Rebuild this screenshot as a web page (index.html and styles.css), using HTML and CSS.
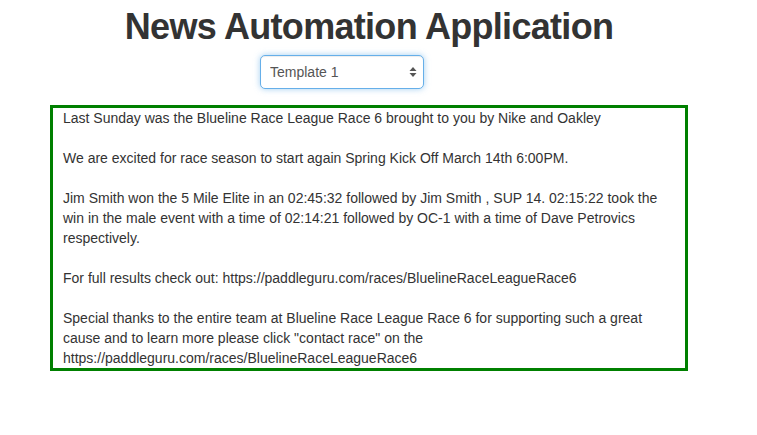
FILE: index.html
```html
<!DOCTYPE html>
<html>
<head>
<meta charset="utf-8">
<link rel="stylesheet" href="styles.css">
</head>
<body>
<main class="page">
  <h1 class="title">News Automation Application</h1>
  <div class="select-wrap">
    <select class="template-select">
      <option>Template 1</option>
      <option>Template 2</option>
    </select>
    <svg class="select-arrows" width="8" height="12" viewBox="0 0 8 12" aria-hidden="true">
      <path d="M4 1 L7.5 5 L0.5 5 Z" fill="#555"/>
      <path d="M4 11 L7.5 7 L0.5 7 Z" fill="#555"/>
    </svg>
  </div>
  <div class="article">
    <p>Last Sunday was the Blueline Race League Race 6 brought to you by Nike and Oakley</p>
    <p>We are excited for race season to start again Spring Kick Off March 14th 6:00PM.</p>
    <p>Jim Smith won the 5 Mile Elite in an 02:45:32 followed by Jim Smith , SUP 14. 02:15:22 took the<br>win in the male event with a time of 02:14:21 followed by OC-1 with a time of Dave Petrovics<br>respectively.</p>
    <p>For full results check out: https://paddleguru.com/races/BluelineRaceLeagueRace6</p>
    <p>Special thanks to the entire team at Blueline Race League Race 6 for supporting such a great<br>cause and to learn more please click "contact race" on the<br>https://paddleguru.com/races/BluelineRaceLeagueRace6</p>
  </div>
</main>
</body>
</html>
```

FILE: styles.css
```css
html, body {
  margin: 0;
  padding: 0;
  background: #fff;
}

body {
  font-family: "Liberation Sans", Arial, sans-serif;
  font-size: 14px;
  line-height: 20px;
  color: #333;
}

.page {
  width: 738px;
  display: flex;
  flex-direction: column;
}

.title {
  margin: 7px 0 0;
  font-size: 36px;
  line-height: 1.1;
  font-weight: bold;
  letter-spacing: -0.7px;
  text-align: center;
  color: #333;
}

.select-wrap {
  position: relative;
  align-self: flex-start;
  margin: 8px 0 0 260px;
  width: 164px;
  height: 34px;
}

.template-select {
  -webkit-appearance: none;
  appearance: none;
  box-sizing: border-box;
  width: 164px;
  height: 34px;
  padding: 0 24px 0 9px;
  font-family: "Liberation Sans", Arial, sans-serif;
  font-size: 14px;
  color: #555;
  background: #fff;
  border: 1px solid #66afe9;
  border-radius: 5px;
  box-shadow: inset 0 1px 1px rgba(0, 0, 0, 0.075), 0 0 6px rgba(102, 175, 233, 0.6);
  outline: none;
}

.select-arrows {
  position: absolute;
  right: 7px;
  top: 11px;
  pointer-events: none;
}

.article {
  box-sizing: border-box;
  margin: 16px 0 0 50px;
  width: 638px;
  border: 3px solid #008000;
  padding: 0 10px;
  white-space: nowrap;
}

.article p {
  margin: 0 0 20px;
}

.article p:last-child {
  margin-bottom: 0;
}
```
